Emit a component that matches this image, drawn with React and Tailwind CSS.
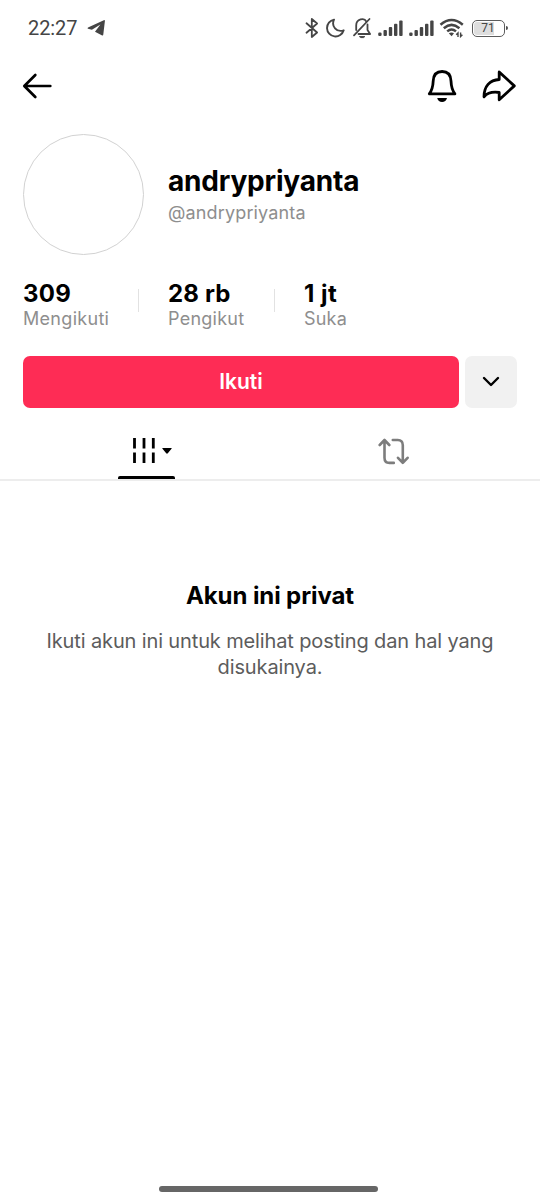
const stats = [
  { value: "309", label: "Mengikuti", box: "w-[115px]", valueStyle: "tracking-[0.3px]", labelStyle: "tracking-[0.3px]" },
  { value: "28 rb", label: "Pengikut", box: "w-[106px]", valueStyle: "tracking-[0.2px]", labelStyle: "tracking-[0.25px]" },
  { value: "1 jt", label: "Suka", box: "w-[80px]", valueStyle: "tracking-[0.5px]", labelStyle: "tracking-[0.2px]" },
];

function SignalIcon({ className }) {
  return (
    <svg className={className} width="26" height="18" viewBox="0 0 26 18" fill="#454545">
      <rect x=".2" y="13.5" width="3.4" height="3.500" rx="1.2" />
      <rect x="5.500" y="11" width="3.400" height="6" rx="1" />
      <rect x="10.800" y="8" width="3.400" height="9" rx="1" />
      <rect x="16" y="4.800" width="3.400" height="12.200" rx="1" />
      <rect x="21.200" y="1.500" width="3.400" height="15.500" rx="1" />
    </svg>
  );
}

function StatusBar() {
  return (
    <div className="flex h-14 items-center pl-[28px] pr-[32px] text-[#454545]">
      <span className="font-[Roboto] text-[20px] leading-6 tracking-[-0.1px]">22:27</span>
      <svg className="ml-[10px]" width="19" height="18" viewBox="0 0 19 18" fill="currentColor">
        <path d="M1 8.600 16.800 1.200q1.200-.4 1.100.8L16.300 15.600q-.3 1.500-1.600.6L8 12.800l5.400-7.300-8.500 5.300L1 9.800q-1-.4 0-1.200Z" />
      </svg>

      <div className="ml-auto flex items-center">
        {/* bluetooth */}
        <svg width="14" height="22" viewBox="0 0 14 22" fill="none" stroke="currentColor" strokeWidth="1.800" strokeLinejoin="round" strokeLinecap="round">
          <path d="m1.500 6.300 10.600 9.200L6.800 20V2l5.300 4.500L1.500 15.700" />
        </svg>
        {/* do not disturb */}
        <svg className="ml-[7px]" width="19" height="20" viewBox="0 0 19 20" fill="none" stroke="currentColor" strokeWidth="1.900" strokeLinejoin="round">
          <path d="M8 1.600A8.500 8.500 0 1 0 17.700 12.300C10.500 14.800 5 8 8 1.600Z" />
        </svg>
        {/* muted bell */}
        <svg className="ml-[7px]" width="20" height="22" viewBox="0 0 20 22" fill="none" stroke="currentColor" strokeWidth="1.800" strokeLinecap="round" strokeLinejoin="round">
          <path d="m2 18.400 15.500-16.400" />
          <path d="M4.200 13V8.500C4.200 1.500 12.500.6 14.200 4.300M15.500 7.500v5.500l2.600 4H6.500" />
          <path d="M7.800 19.600h5l-1.300 1H9.100Z" fill="currentColor" strokeWidth="1" />
        </svg>
        <SignalIcon className="ml-[6px]" />
        <SignalIcon className="ml-[5px]" />
        {/* wifi */}
        <svg className="ml-[4px]" width="26" height="20" viewBox="0 0 26 20" fill="none" stroke="currentColor" strokeWidth="2.500">
          <path d="M1.500 6.800Q12.500-2.700 23.800 6.800M4.800 10.200Q12.600 3.500 20.400 10.200M8.200 13.400Q12.600 9.700 17 13.400" />
          <path d="m9.800 15.300 2.800 3 2.400-3q-2.500-1.500-5.200 0Z" fill="currentColor" stroke="none" />
          <path d="M19 19v-4l-1.800 1.800M21.600 14.500v4l1.800-1.800" strokeWidth="1.400" />
        </svg>
        {/* battery */}
        <div className="ml-[7px] flex h-[17px] w-[33px] rounded-[5px] border-[1.5px] border-[#5c5c5c] p-px">
          <div className="flex flex-1 items-center justify-center rounded-[3px] bg-linear-to-r from-[#dedede] from-68% to-white to-68% pr-px font-[Roboto] text-[12px] leading-3">
            71
          </div>
        </div>
        <span className="ml-px h-1 w-[2px] rounded-r-sm bg-[#505050]" />
      </div>
    </div>
  );
}

function Header() {
  return (
    <div className="flex h-[60px] items-center pr-[23px] pl-[22px] text-black">
      <svg width="30" height="26" viewBox="0 0 30 26" fill="none" stroke="currentColor" strokeWidth="2.700" strokeLinecap="round" strokeLinejoin="round">
        <path d="M13.300 2 2.300 13l11 11M3 13h25.300" />
      </svg>
      <svg className="ml-auto" width="30" height="34" viewBox="0 0 30 34" fill="none" stroke="currentColor" strokeWidth="2.800" strokeLinecap="round" strokeLinejoin="round">
        <path d="M2.300 24.900h25.600c-3-4.100-3.700-7.500-3.900-12.900C23.700 5.700 20.500 2.500 15.100 2.500S6.500 5.700 6.200 12c-.2 5.400-.9 8.800-3.900 12.900Z" />
        <path d="M10.200 28.900h9.800c-.6 2.700-2.500 4.100-4.900 4.100s-4.300-1.400-4.900-4.100Z" fill="currentColor" stroke="none" />
      </svg>
      <svg className="ml-[25px]" width="35" height="32" viewBox="0 0 35 32" fill="none" stroke="currentColor" strokeWidth="2.800" strokeLinejoin="round">
        <path d="M17.200 2 32.300 15.900 17.200 29.800v-7.300C10 21.500 5 23.200 2 26.800 2 16.500 7.700 9.900 17.200 9.500Z" />
      </svg>
    </div>
  );
}

export default function App() {
  return (
    <div className="flex h-[1200px] w-[540px] flex-col overflow-hidden bg-white font-[Inter,sans-serif] text-black">
      <StatusBar />
      <Header />

      <div className="flex items-center px-[23px] pt-[18px]">
        <div className="size-[121px] rounded-full border border-[#d2d2d2]" />
        <div className="ml-6 pt-[2px]">
          <h1 className="whitespace-nowrap text-[28px] leading-8 font-bold tracking-[-0.2px]">andrypriyanta</h1>
          <p className="mt-[2px] whitespace-nowrap text-[18px] leading-7 tracking-[0.15px] text-[#8e8e8e]">@andrypriyanta</p>
        </div>
      </div>

      <div className="mt-[26px] flex px-[23px]">
        {stats.map((s, i) => (
          <div key={s.label} className="flex">
            {i > 0 && <div className="mt-[8px] mr-[29px] h-[23px] w-px bg-[#e2e2e2]" />}
            <div className={s.box}>
              <p className={`whitespace-nowrap text-[24px] leading-[26px] font-bold ${s.valueStyle}`}>{s.value}</p>
              <p className={`whitespace-nowrap text-[18px] leading-[23px] text-[#8e8e8e] ${s.labelStyle}`}>{s.label}</p>
            </div>
          </div>
        ))}
      </div>

      <div className="mt-[26px] flex gap-[6px] px-[23px]">
        <button className="h-[52px] flex-1 rounded-[7px] bg-[#fe2c55] text-[21px] font-semibold text-white">Ikuti</button>
        <button className="flex h-[52px] w-[52px] items-center justify-center rounded-[7px] bg-[#f1f1f1]">
          <svg width="18" height="12" viewBox="0 0 18 12" fill="none" stroke="currentColor" strokeWidth="2.400" strokeLinecap="round" strokeLinejoin="round">
            <path d="m2 2 7 7 7-7" />
          </svg>
        </button>
      </div>

      <div className="flex h-[73px] border-b-2 border-[#ededed]">
        <div className="flex w-[293px] flex-col items-center">
          <div className="flex flex-1 items-center gap-[6px] pt-[17px] pl-[10px]">
            <svg width="24" height="27" viewBox="0 0 24 27" stroke="currentColor" strokeWidth="2.800">
              <path d="M2.500 1v10.500M12 1v10.500M21.300 1v10.500M2.500 15.500V26M12 15.500V26M21.300 15.500V26" />
            </svg>
            <svg width="10" height="6" viewBox="0 0 10 6" fill="currentColor">
              <path d="M.8 0h8.400q1 0 .3.800L5.800 5.300q-.8.800-1.600 0L.5.800Q-.2 0 .8 0Z" />
            </svg>
          </div>
          <div className="h-[3px] w-[57px] rounded-t-[2px] bg-black" />
        </div>
        <div className="flex flex-1 items-center pt-[15px] pl-[85px] text-[#7d7d7d]">
          <svg width="31" height="27" viewBox="0 0 31 27" fill="none" stroke="currentColor" strokeWidth="2.600" strokeLinecap="round" strokeLinejoin="round">
            <path d="M1.700 7 6.500 2l4.800 5M6.500 2.500v17.200q0 5.200 5 5.200h4.300M14.800 2h5q5 0 5 5.200v17.300M20 19.800l4.800 5 4.800-5" />
          </svg>
        </div>
      </div>

      <div className="mt-[99px] flex flex-col items-center text-center">
        <h2 className="whitespace-nowrap text-[24px] leading-8 font-bold tracking-[-0.1px]">Akun ini privat</h2>
        <p className="mt-[16px] whitespace-nowrap text-[20px] leading-[26px] tracking-[-0.13px] text-[#5c5c5c]">
          Ikuti akun ini untuk melihat posting dan hal yang
          <br />
          disukainya.
        </p>
      </div>

      <div className="mt-auto mb-[8px] ml-[159px] h-[6px] w-[219px] rounded-full bg-[#666666]" />
    </div>
  );
}
